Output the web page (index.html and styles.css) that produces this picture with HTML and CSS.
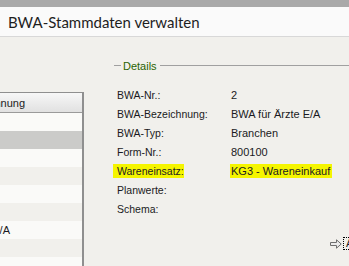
FILE: index.html
```html
<!DOCTYPE html>
<html lang="de">
<head>
  <meta charset="UTF-8">
  <title>BWA-Stammdaten verwalten</title>
  <link rel="stylesheet" href="styles.css">
</head>
<body>
  <div class="topbar"></div>
  <div class="titlebar">BWA-Stammdaten verwalten</div>

  <div class="main">
    <div class="grid">
      <div class="grid-head"><span class="head-text">Bezeichnung</span></div>
      <div class="row light"></div>
      <div class="row selected"></div>
      <div class="row light"></div>
      <div class="row alt"></div>
      <div class="row light"></div>
      <div class="row alt"></div>
      <div class="row light"><span class="cell-text">BWA für Ärzte E/A</span></div>
      <div class="row alt"></div>
      <div class="row light"></div>
    </div>

    <div class="details">
      <div class="legend">
        <span class="legend-line short"></span>
        <span class="legend-text">Details</span>
        <span class="legend-line"></span>
      </div>

      <div class="fields">
        <span class="label">BWA-Nr.:</span><span class="value">2</span>
        <span class="label">BWA-Bezeichnung:</span><span class="value">BWA für Ärzte E/A</span>
        <span class="label">BWA-Typ:</span><span class="value">Branchen</span>
        <span class="label">Form-Nr.:</span><span class="value">800100</span>
        <span class="label mark">Wareneinsatz:</span><span class="value mark">KG3 - Wareneinkauf</span>
        <span class="label">Planwerte:</span><span class="value"></span>
        <span class="label">Schema:</span><span class="value"></span>
      </div>

      <div class="footer">
        <svg class="arrow" width="12" height="10" viewBox="0 0 12 10">
          <path d="M0.5 3.5 H6.5 V0.8 L11.2 5 L6.5 9.2 V6.5 H0.5 Z" fill="#ececec" stroke="#6e6e6e" stroke-width="1"/>
        </svg>
        <span class="focus">Anzeigen</span>
      </div>
    </div>
  </div>
</body>
</html>
```

FILE: styles.css
```css
body {
  margin: 0;
  width: 349px;
  height: 266px;
  overflow: hidden;
  background: #f1f0ec;
  font-family: "Liberation Sans", Arial, sans-serif;
  font-size: 11px;
  color: #1a1a22;
}
.topbar {
  height: 7px;
  background: #a9a9a9;
}
.titlebar {
  height: 29px;
  line-height: 30px;
  padding-left: 8px;
  background: #fafafa;
  border-bottom: 1px solid #d8d8d8;
  font-family: Lato, "Open Sans", sans-serif;
  font-size: 15px;
  color: #1e1e1e;
  white-space: nowrap;
}
.main {
  display: flex;
}
.grid {
  width: 82px;
  margin-top: 55px;
  border-right: 2px solid #8f8f8f;
  flex-shrink: 0;
}
.grid-head {
  height: 19px;
  border-top: 1px solid #8f8f8f;
  border-bottom: 1px solid #9a9a9a;
  background: linear-gradient(#f7f7f7, #e1e1e1);
  display: flex;
  justify-content: flex-end;
  align-items: center;
  overflow: hidden;
  white-space: nowrap;
  padding-right: 57px;
}
.row {
  height: 18px;
  display: flex;
  justify-content: flex-end;
  align-items: center;
  overflow: hidden;
  white-space: nowrap;
}
.row.light {
  background: #fafaf8;
}
.row.alt {
  background: #f1f0ec;
}
.row.selected {
  background: #cbcbc9;
}
.cell-text {
  padding-right: 72px;
}
.details {
  flex: 1;
  min-width: 0;
}
.legend {
  display: flex;
  align-items: center;
  height: 13px;
  margin-top: 22px;
}
.legend-line {
  flex: 1;
  height: 1px;
  background: #a0a0a0;
}
.legend-line.short {
  flex: none;
  width: 7px;
  margin-left: 30px;
}
.legend-text {
  padding: 0 3px 0 2px;
  color: #2a6400;
  font-size: 11px;
}
.fields {
  display: grid;
  grid-template-columns: 118px auto;
  grid-auto-rows: 19px;
  align-items: center;
  justify-items: start;
  margin: 13px 0 0 29px;
}
.label, .value {
  line-height: 14px;
  white-space: nowrap;
}
.label {
  padding-left: 4px;
  font-size: 10.5px;
}
.value {
  padding: 0 2px 0 1px;
  margin-left: -1px;
}
.mark {
  background: #f5f500;
}
.footer {
  display: flex;
  align-items: center;
  margin: 19px 0 0 246px;
  white-space: nowrap;
}
.arrow {
  flex-shrink: 0;
  margin-right: 1px;
}
.focus {
  flex-shrink: 0;
  border: 1px dotted #000;
  padding: 0 2px;
  line-height: 11px;
  color: #1a1a22;
}
```
